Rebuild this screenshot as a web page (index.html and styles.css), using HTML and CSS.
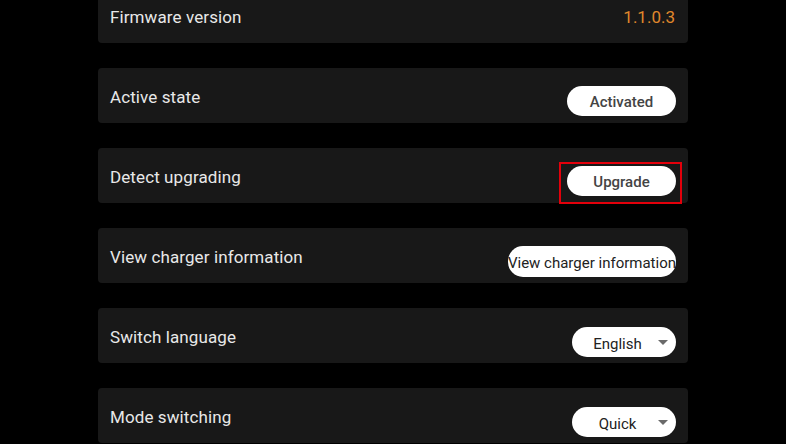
FILE: index.html
```html
<!DOCTYPE html>
<html lang="en">
<head>
    <meta charset="UTF-8">
    <meta name="viewport" content="width=device-width, initial-scale=1.0">
    <title>Charger Settings</title>
    <link rel="stylesheet" href="styles.css">
</head>
<body>
    <main class="settings-list">
        <div class="setting-row">
            <span class="setting-label">Firmware version</span>
            <span class="setting-value">1.1.0.3</span>
        </div>

        <div class="setting-row">
            <span class="setting-label">Active state</span>
            <button class="pill-button">Activated</button>
        </div>

        <div class="setting-row">
            <span class="setting-label">Detect upgrading</span>
            <button class="pill-button highlighted">Upgrade</button>
        </div>

        <div class="setting-row">
            <span class="setting-label">View charger information</span>
            <button class="pill-button wide">View charger information</button>
        </div>

        <div class="setting-row">
            <span class="setting-label">Switch language</span>
            <div class="pill-select">
                <span class="select-text">English</span>
                <span class="select-arrow"></span>
            </div>
        </div>

        <div class="setting-row">
            <span class="setting-label">Mode switching</span>
            <div class="pill-select">
                <span class="select-text">Quick</span>
                <span class="select-arrow"></span>
            </div>
        </div>
    </main>
</body>
</html>
```

FILE: styles.css
```css
* {
    margin: 0;
    padding: 0;
    box-sizing: border-box;
    font-family: Roboto, 'Noto Sans', sans-serif;
}

html, body {
    background-color: #000;
    height: 100%;
    overflow: hidden;
}

.settings-list {
    width: 590px;
    margin: -12px auto 0;
    display: flex;
    flex-direction: column;
    gap: 25px;
}

.setting-row {
    height: 55px;
    display: flex;
    justify-content: space-between;
    align-items: center;
    padding: 0 12px;
    background-color: #181818;
    border-radius: 4px;
}

.setting-label {
    font-size: 17px;
    letter-spacing: 0.1px;
    color: #e8e8e8;
    padding-top: 2px;
}

.setting-value {
    font-size: 17px;
    color: #e0882c;
    margin-right: 1px;
    padding-top: 2px;
}

.pill-button {
    position: relative;
    align-self: flex-end;
    margin-bottom: 7px;
    width: 109px;
    height: 30px;
    padding-top: 2px;
    border: none;
    border-radius: 15px;
    background: #fff;
    color: #444;
    font-size: 15px;
    font-weight: 500;
    white-space: nowrap;
    cursor: pointer;
}

.pill-button.wide {
    width: auto;
    margin-bottom: 6px;
    height: 31px;
    font-weight: 400;
    color: #222;
    display: flex;
    align-items: center;
    justify-content: center;
}

.pill-button.highlighted::after {
    content: '';
    position: absolute;
    left: -8px;
    right: -6px;
    top: -4px;
    bottom: -8px;
    border: 2px solid #e3000b;
}

.pill-select {
    align-self: flex-end;
    margin-bottom: 6px;
    width: 104px;
    height: 30px;
    border-radius: 15px;
    background: #fff;
    display: flex;
    align-items: center;
    padding: 3px 8px 0 10px;
}

.select-text {
    flex: 1;
    text-align: center;
    font-size: 15px;
    color: #222;
    margin-right: 5px;
}

.select-arrow {
    width: 0;
    height: 0;
    margin-bottom: 3px;
    border-left: 5px solid transparent;
    border-right: 5px solid transparent;
    border-top: 5px solid #6a6a6a;
}
```
